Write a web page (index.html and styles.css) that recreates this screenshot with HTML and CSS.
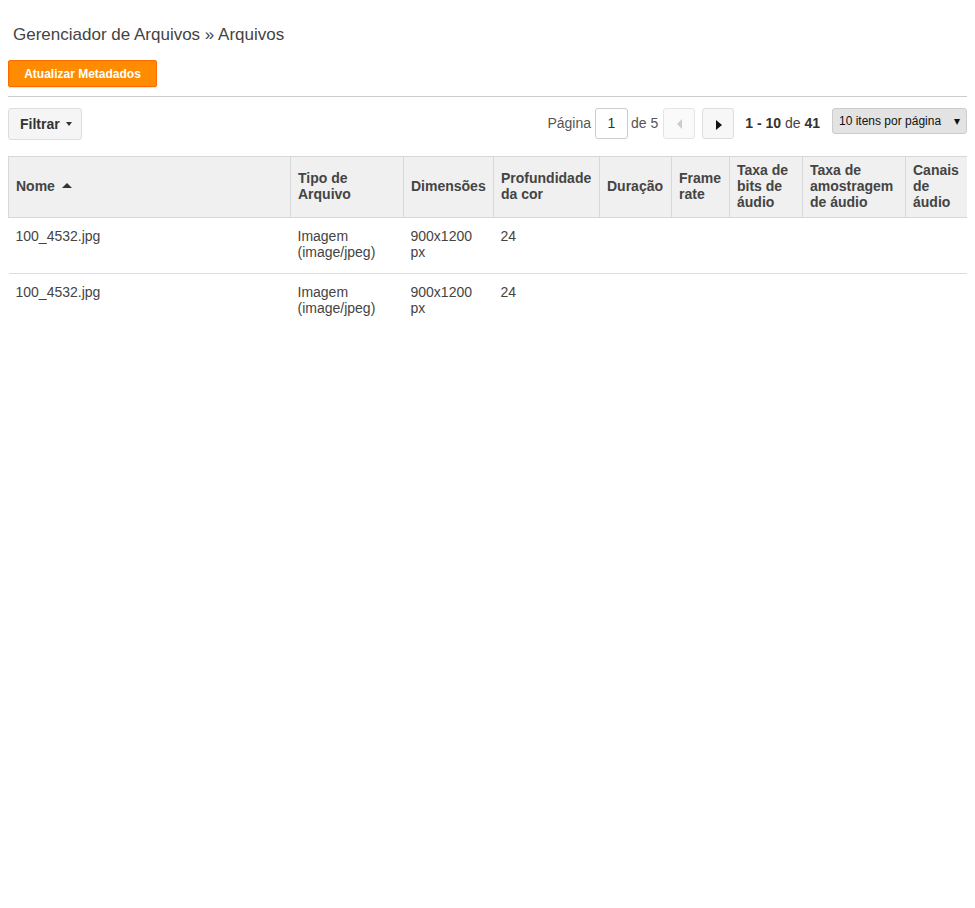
FILE: index.html
```html
<!DOCTYPE html>
<html lang="pt">
<head>
<meta charset="utf-8">
<title>Arquivos</title>
<link rel="stylesheet" href="styles.css">
</head>
<body>
<div class="page">
  <h1 class="title">Gerenciador de Arquivos <span class="sep">»</span> Arquivos</h1>
  <div class="actions">
    <button class="btn-orange">Atualizar Metadados</button>
  </div>
  <hr class="divider">
  <div class="toolbar">
    <button class="btn-filter">Filtrar <span class="caret"></span></button>
    <div class="pager">
      <span class="pager-text">Página</span>
      <input class="page-input" type="text" value="1">
      <span class="pager-text">de 5</span>
      <button class="page-btn prev"><span class="tri-left"></span></button>
      <button class="page-btn next"><span class="tri-right"></span></button>
      <span class="pager-count"><b>1 - 10</b> de <b>41</b></span>
      <div class="per-page">10 itens por página<span class="per-arrow">▾</span></div>
    </div>
  </div>
  <table class="grid">
    <colgroup>
      <col style="width:282px">
      <col style="width:113px">
      <col style="width:90px">
      <col style="width:106px">
      <col style="width:72px">
      <col style="width:58px">
      <col style="width:73px">
      <col style="width:103px">
      <col style="width:62px">
    </colgroup>
    <thead>
      <tr>
        <th>Nome <span class="sort-up"></span></th>
        <th>Tipo de Arquivo</th>
        <th>Dimensões</th>
        <th>Profundidade da cor</th>
        <th>Duração</th>
        <th>Frame rate</th>
        <th>Taxa de bits de áudio</th>
        <th>Taxa de amostragem de áudio</th>
        <th>Canais de áudio</th>
      </tr>
    </thead>
    <tbody>
      <tr>
        <td>100_4532.jpg</td>
        <td>Imagem (image/jpeg)</td>
        <td>900x1200 px</td>
        <td>24</td>
        <td></td><td></td><td></td><td></td><td></td>
      </tr>
      <tr>
        <td>100_4532.jpg</td>
        <td>Imagem (image/jpeg)</td>
        <td>900x1200 px</td>
        <td>24</td>
        <td></td><td></td><td></td><td></td><td></td>
      </tr>
    </tbody>
  </table>
</div>
</body>
</html>
```

FILE: styles.css
```css
html, body {
  margin: 0;
  padding: 0;
  background: #fff;
}
body {
  margin: 8px;
  font-family: "Liberation Sans", Arial, sans-serif;
  color: #444;
}
.title {
  margin: 17px 0 0 5px;
  font-size: 17px;
  font-weight: normal;
  line-height: 20px;
  color: #444;
}
.actions {
  margin-top: 15px;
  display: flex;
}
.btn-orange {
  height: 27px;
  width: 149px;
  padding: 0;
  border: 1px solid #ff6a00;
  border-radius: 2px;
  background: #ff8c00;
  color: #fff;
  font-family: "Liberation Sans", Arial, sans-serif;
  font-size: 12px;
  font-weight: bold;
  box-shadow: 0 1px 1px rgba(0,0,0,0.12);
}
.divider {
  margin: 9px 0 0;
  border: 0;
  border-top: 1px solid #ccc;
  height: 0;
}
.toolbar {
  margin-top: 11px;
  display: flex;
  justify-content: space-between;
  align-items: flex-start;
}
.btn-filter {
  height: 32px;
  width: 74px;
  padding: 0 0 0 11px;
  text-align: left;
  border: 1px solid #ddd;
  border-radius: 3px;
  background: #f5f5f5;
  color: #333;
  font-family: "Liberation Sans", Arial, sans-serif;
  font-size: 14px;
  font-weight: bold;
  display: flex;
  align-items: center;
}
.caret {
  display: inline-block;
  margin-left: 6px;
  width: 0;
  height: 0;
  border-left: 3px solid transparent;
  border-right: 3px solid transparent;
  border-top: 4px solid #333;
}
.pager {
  display: flex;
  align-items: flex-start;
  font-size: 14px;
}
.pager-text {
  line-height: 31px;
  color: #555;
}
.page-input {
  box-sizing: border-box;
  width: 33px;
  height: 31px;
  margin: 0 3px 0 4px;
  border: 1px solid #ccc;
  border-radius: 3px;
  text-align: center;
  font-family: "Liberation Sans", Arial, sans-serif;
  font-size: 14px;
  color: #333;
  padding: 0 0 1px;
}
.page-btn {
  box-sizing: border-box;
  width: 32px;
  height: 31px;
  border: 1px solid #ddd;
  border-radius: 3px;
  background: #f7f7f7;
  padding: 0;
  display: flex;
  align-items: center;
  justify-content: center;
}
.page-btn.prev {
  margin-left: 5px;
  background: #fafafa;
  border-color: #e4e4e4;
}
.page-btn.next {
  margin-left: 7px;
}
.tri-left {
  width: 0;
  height: 0;
  border-top: 5px solid transparent;
  border-bottom: 5px solid transparent;
  border-right: 5px solid #ccc;
}
.tri-right {
  width: 0;
  height: 0;
  border-top: 5px solid transparent;
  border-bottom: 5px solid transparent;
  border-left: 6px solid #111;
  margin-left: 1px;
  margin-top: 2px;
}
.pager-count {
  margin-left: 11px;
  line-height: 31px;
  color: #444;
}
.pager-count b {
  color: #333;
}
.per-page {
  box-sizing: border-box;
  margin-left: 12px;
  width: 135px;
  height: 26px;
  border: 1px solid #ccc;
  border-radius: 3px;
  background: #e3e3e3;
  color: #111;
  font-size: 12px;
  line-height: 24px;
  padding-left: 6px;
  display: flex;
  justify-content: space-between;
}
.per-arrow {
  font-size: 12px;
  padding-right: 6px;
}
.grid {
  margin-top: 16px;
  width: 959px;
  border-collapse: collapse;
  table-layout: fixed;
  font-size: 14px;
  color: #444;
}
.grid th {
  background: #f0f0f0;
  border: 1px solid #d8d8d8;
  text-align: left;
  font-weight: bold;
  line-height: 16px;
  padding: 5px 3px 7px 7px;
  vertical-align: middle;
  color: #444;
  height: 48px;
}
.sort-up {
  display: inline-block;
  width: 0;
  height: 0;
  margin-left: 3px;
  vertical-align: 3px;
  border-left: 5px solid transparent;
  border-right: 5px solid transparent;
  border-bottom: 5px solid #333;
}
.grid td {
  padding: 10px 7px 13px 7px;
  line-height: 16px;
  vertical-align: top;
  color: #444;
  height: 32px;
}
.grid tbody tr:first-child td {
  border-bottom: 1px solid #ddd;
}
```
